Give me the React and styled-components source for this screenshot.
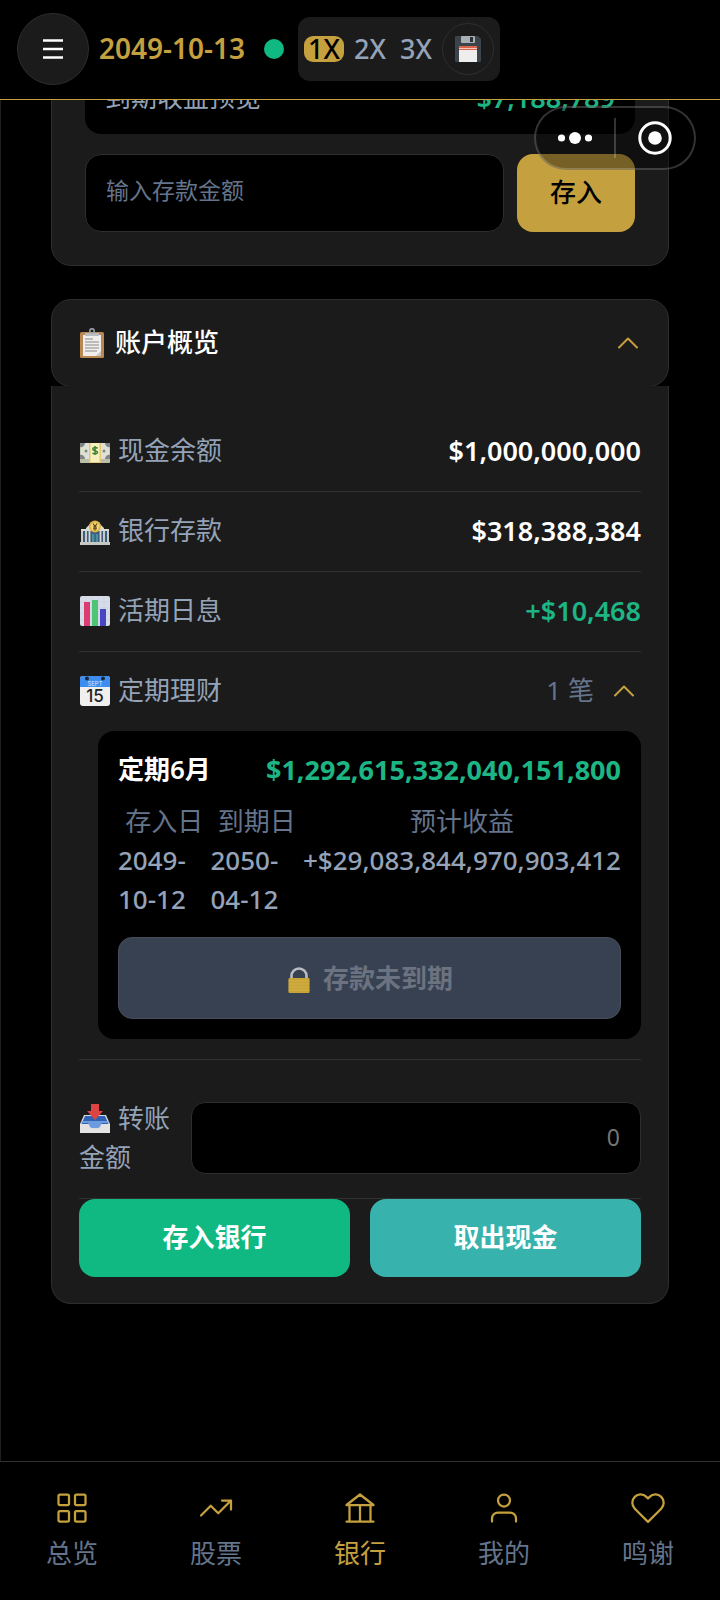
import React, { useState } from 'react';
import styled, { createGlobalStyle } from 'styled-components';

const GOLD = '#C5A03F';
const GREEN = '#10B981';

export default function App(){

    const [Speed, setSpeed] = useState("1X")
    const [ShowOverview, setShowOverview] = useState(true)
    const [ShowFixed, setShowFixed] = useState(true)
    const [Tab, setTab] = useState("银行")

    const speeds = ["1X","2X","3X"]
    const rows = [
        { icon: <CashIcon/>, label: "现金余额", value: "$1,000,000,000" },
        { icon: <BankEmoji/>, label: "银行存款", value: "$318,388,384" },
        { icon: <ChartEmoji/>, label: "活期日息", value: "+$10,468", up: true }
    ]
    const tabs = [
        { name: "总览", icon: <GridIcon/> },
        { name: "股票", icon: <TrendIcon/> },
        { name: "银行", icon: <BankIcon/> },
        { name: "我的", icon: <UserIcon/> },
        { name: "鸣谢", icon: <HeartIcon/> }
    ]

    return(
        <>
        <GlobalStyle/>
        <Header>
            <MenuButton aria-label="菜单"><MenuIcon/></MenuButton>
            <GameDate>2049-10-13</GameDate>
            <StatusDot/>
            <SpeedPanel>
                {speeds.map((s) => <SpeedButton key={s} $active={s === Speed} onClick={() => setSpeed(s)}>{s}</SpeedButton>)}
                <SaveButton aria-label="保存"><FloppyEmoji/></SaveButton>
            </SpeedPanel>
        </Header>

        <Capsule>
            <CapsuleButton aria-label="更多"><DotsIcon/></CapsuleButton>
            <CapsuleLine/>
            <CapsuleButton aria-label="关闭"><TargetIcon/></CapsuleButton>
        </Capsule>

        <Screen>
            <DepositCard>
                <Preview>
                    <PreviewLabel>到期收益预览</PreviewLabel>
                    <Money $up>$7,188,789</Money>
                </Preview>
                <DepositForm>
                    <DepositInput aria-label="存款金额" placeholder="输入存款金额"/>
                    <DepositButton>存入</DepositButton>
                </DepositForm>
            </DepositCard>

            <OverviewHead onClick={() => setShowOverview(!ShowOverview)}>
                <OverviewTitle><ClipboardEmoji/>账户概览</OverviewTitle>
                <ChevronIcon/>
            </OverviewHead>

            {ShowOverview && <OverviewBody>
                {rows.map((r) => (
                    <Row key={r.label}>
                        <RowLabel>{r.icon}{r.label}</RowLabel>
                        <Money $up={r.up}>{r.value}</Money>
                    </Row>
                ))}

                <FixedSection>
                    <FixedHead onClick={() => setShowFixed(!ShowFixed)}>
                        <RowLabel><CalendarEmoji/>定期理财</RowLabel>
                        <FixedCount>1 笔<ChevronIcon/></FixedCount>
                    </FixedHead>
                    {ShowFixed && <FixedCard>
                        <FixedTitle>
                            <FixedName>定期6月</FixedName>
                            <Money $up $strong>$1,292,615,332,040,151,800</Money>
                        </FixedTitle>
                        <FixedInfo>
                            <div><dt>存入日</dt><dd>2049-<wbr/>10-12</dd></div>
                            <div><dt>到期日</dt><dd>2050-<wbr/>04-12</dd></div>
                            <div><dt>预计收益</dt><dd>+$29,083,844,970,903,412</dd></div>
                        </FixedInfo>
                        <LockedButton disabled><LockEmoji/>存款未到期</LockedButton>
                    </FixedCard>}
                </FixedSection>

                <TransferRow>
                    <TransferLabel htmlFor="transfer"><InboxEmoji/>转账金额</TransferLabel>
                    <TransferInput id="transfer" placeholder="0"/>
                </TransferRow>
                <Actions>
                    <ActionButton $color={GREEN}>存入银行</ActionButton>
                    <ActionButton $color="#38B2AC">取出现金</ActionButton>
                </Actions>
            </OverviewBody>}
        </Screen>

        <TabBar>
            {tabs.map((t) => (
                <TabLink key={t.name} href="#" $active={t.name === Tab} onClick={() => setTab(t.name)}>
                    {t.icon}
                    {t.name}
                </TabLink>
            ))}
        </TabBar>
        </>
    )
}

// ICONES

function MenuIcon(){
    return <svg width="20" height="20" viewBox="0 0 20 20" stroke="#fff" strokeWidth="2.400"><path d="M0 1.500h20M0 10h20M0 18.500h20"/></svg>
}

function DotsIcon(){
    return <svg width="34" height="14" viewBox="0 0 34 14" fill="#fff"><circle cx="3.500" cy="7" r="3.600"/><circle cx="17" cy="7" r="6"/><circle cx="30.500" cy="7" r="3.600"/></svg>
}

function TargetIcon(){
    return <svg width="34" height="34" viewBox="0 0 34 34"><circle cx="17" cy="17" r="15.200" fill="none" stroke="#fff" strokeWidth="3"/><circle cx="17" cy="17" r="6.800" fill="#fff"/></svg>
}

function ChevronIcon(){
    return <svg width="20" height="12" viewBox="0 0 20 12" fill="none" stroke={GOLD} strokeWidth="2" strokeLinecap="round" strokeLinejoin="round"><path d="M1 10.500l9-9 9 9"/></svg>
}

function GridIcon(){
    return <LineIcon viewBox="0 0 24 24"><rect x="3" y="3" width="7" height="7" rx="1"/><rect x="14" y="3" width="7" height="7" rx="1"/><rect x="3" y="14" width="7" height="7" rx="1"/><rect x="14" y="14" width="7" height="7" rx="1"/></LineIcon>
}

function TrendIcon(){
    return <LineIcon viewBox="0 0 24 24"><path d="M2 17l6.500-6.500 5 5L22 7M16 7h6v6"/></LineIcon>
}

function BankIcon(){
    return <LineIcon viewBox="0 0 24 24"><path d="M3 21h18M3 10h18M3 10l9-7 9 7M5 10v11M12 10v11M19 10v11"/></LineIcon>
}

function UserIcon(){
    return <LineIcon viewBox="0 0 24 24"><path d="M20 21v-2a4 4 0 0 0-4-4H8a4 4 0 0 0-4 4v2"/><circle cx="12" cy="7" r="4"/></LineIcon>
}

function HeartIcon(){
    return <LineIcon viewBox="0 0 24 24"><path d="M20.840 4.610a5.500 5.500 0 0 0-7.780 0L12 5.670l-1.060-1.060a5.500 5.500 0 0 0-7.780 7.780l1.060 1.060L12 21.230l7.780-7.780 1.060-1.060a5.500 5.500 0 0 0 0-7.780z"/></LineIcon>
}

function FloppyEmoji(){
    return(
        <svg width="26" height="26" viewBox="0 0 26 26">
            <path d="M1 0h22l3 3v22a1 1 0 0 1-1 1H1a1 1 0 0 1-1-1V1a1 1 0 0 1 1-1z" fill="#3A444A"/>
            <rect x="6" y="0" width="14" height="7" rx="1" fill="#A9AFB3"/>
            <rect x="15" y="1" width="3" height="5" fill="#2A3237"/>
            <rect x="4" y="10" width="18" height="16" fill="#EDEDED"/>
            <rect x="4" y="10" width="18" height="4" fill="#D9644A"/>
            <path d="M4 12.500h18" stroke="#F3C9BE" strokeWidth="1"/>
        </svg>
    )
}

function ClipboardEmoji(){
    return(
        <Emoji width="28" height="32" viewBox="0 0 28 32" $gap={8}>
            <rect x="1" y="5" width="24" height="26" rx="1.500" fill="#B98850"/>
            <rect x="4" y="8" width="18" height="21" fill="#F0EEEC"/>
            <path d="M22 24v5h-5z" fill="#C9C5C1"/>
            <path d="M6 6h14v3H6z" fill="#B9BDC1"/>
            <circle cx="13" cy="4" r="2.200" fill="none" stroke="#A5AAAF" strokeWidth="1.400"/>
            <path d="M6 12h8M6 15h14M6 18h14M6 21h14M6 24h12" stroke="#8A8A8A" strokeWidth="1.200"/>
        </Emoji>
    )
}

function CashIcon(){
    return(
        <Emoji width="32" height="32" viewBox="0 0 32 32" $gap={7}>
            <rect x="1" y="8" width="30" height="20" rx="1" fill="#C9CDB4"/>
            <rect x="2" y="8" width="28" height="16" fill="#E0E1D6"/>
            <path d="M1 8h5a4 4 0 0 1-5 4zM31 8h-5a4 4 0 0 0 5 4zM1 24h5a4 4 0 0 0-5-4zM31 24h-5a4 4 0 0 1 5-4z" fill="#7F8488"/>
            <circle cx="7" cy="16" r="1.500" fill="#7F8A78"/><circle cx="25" cy="16" r="1.500" fill="#7F8A78"/>
            <rect x="10" y="8" width="12" height="20" fill="#E6C776"/>
            <rect x="11.500" y="8" width="9" height="19" fill="#F5EFBE"/>
            <path d="M18.500 13.500c-.8-1.300-4.800-1.300-4.800.6 0 2 4.800 1.200 4.800 3.200 0 1.900-4 2-5 .5M16 11v9" fill="none" stroke="#3F8235" strokeWidth="1.500"/>
            <path d="M1 25h9M22 25h9M1 27h9M22 27h9" stroke="#A5A88F" strokeWidth=".7"/>
        </Emoji>
    )
}

function BankEmoji(){
    return(
        <Emoji width="32" height="32" viewBox="0 0 32 32" $gap={7}>
            <path d="M2 15h28v13H2z" fill="#3E5C7E"/>
            <path d="M2 14h7v2H2zM23 14h7v2h-7zM7 13l5-5h8l5 5v3H7z" fill="#D9DCD3"/>
            <path d="M3 16v11M7 15v12M10.500 15v12M21.500 15v12M25 15v12M29 16v11" stroke="#D5D8D0" strokeWidth="1.800"/>
            <rect x="13" y="19" width="6" height="8" fill="#4E8FA0"/>
            <path d="M16 19v8" stroke="#27465A"/>
            <circle cx="16" cy="11.500" r="6" fill="#E0B647"/>
            <circle cx="16" cy="11.500" r="4" fill="#F3D77B"/>
            <path d="M14 8.500l2 3 2-3M16 11.500v4M14 12h4M14 13.700h4" stroke="#5B4218" strokeWidth="1.100" fill="none"/>
            <path d="M1 27h30v3H1z" fill="#C6C9C4"/>
        </Emoji>
    )
}

function ChartEmoji(){
    return(
        <Emoji width="32" height="32" viewBox="0 0 32 32" $gap={7}>
            <rect x="1" y="1" width="30" height="30" rx="2" fill="#D7DDE8"/>
            <path d="M1 7h30M1 13h30M1 19h30M1 25h30M7 1v30M13 1v30M19 1v30M25 1v30" stroke="#C6CDDB" strokeWidth=".6"/>
            <rect x="5" y="7" width="6" height="24" fill="#DB3D73"/>
            <rect x="13" y="5" width="6" height="26" fill="#4DC574"/>
            <rect x="21" y="14" width="6" height="17" fill="#4A45C4"/>
        </Emoji>
    )
}

function CalendarEmoji(){
    return(
        <Emoji width="32" height="32" viewBox="0 0 32 32" $gap={7}>
            <rect x="1" y="1" width="30" height="30" rx="3" fill="#EFEFEF"/>
            <path d="M1 12V4a3 3 0 0 1 3-3h24a3 3 0 0 1 3 3v8z" fill="#3D8DF0"/>
            <circle cx="8" cy="3.500" r="2" fill="#1B2733"/><circle cx="24" cy="3.500" r="2" fill="#1B2733"/>
            <text x="16" y="10.500" fontSize="6" textAnchor="middle" fill="#D4E6FF" fontFamily="Inter, sans-serif">SEPT</text>
            <text x="16" y="27" fontSize="17" fontWeight="500" textAnchor="middle" fill="#222" fontFamily="Inter, sans-serif">15</text>
        </Emoji>
    )
}

function LockEmoji(){
    return(
        <Emoji width="26" height="30" viewBox="0 0 26 30" $gap={11}>
            <path d="M5.500 15v-4a7.500 7.500 0 0 1 15 0v4" fill="none" stroke="#B9BDC1" strokeWidth="2.600"/>
            <rect x="2.500" y="13" width="21" height="15" rx="1" fill="#C9A536"/>
            <path d="M2.500 16h21M2.500 19h21M2.500 22h21M2.500 25h21" stroke="#D2B046" strokeWidth="1"/>
        </Emoji>
    )
}

function InboxEmoji(){
    return(
        <Emoji width="32" height="32" viewBox="0 0 32 32" $gap={7}>
            <path d="M5 12h22l4 9v9H1v-9z" fill="#DCDCE0"/>
            <path d="M6 13h20l3.500 8H2.500z" fill="#2F62B5"/>
            <path d="M2.500 20H9c1 0 1.500 5 4 5h6c2.500 0 3-5 4-5h6.500v-2h-27z" fill="#6E9BE0"/>
            <path d="M1 21h7.500c1 0 1.500 5 4 5h7c2.500 0 3-5 4-5H31v9H1z" fill="#E4E3E3"/>
            <path d="M12 1h8v7h4l-8 9-8-9h4z" fill="#DE4444"/>
        </Emoji>
    )
}

const GlobalStyle = createGlobalStyle`
    * {
        box-sizing: border-box;
    }
    body {
        margin: 0;
        background: #000;
        color: #fff;
        font-family: 'Noto Sans', 'Noto Sans CJK SC', sans-serif;
        font-size: 26px;
        line-height: 39px;
    }
    button, input {
        font-family: inherit;
        font-size: 26px;
        color: inherit;
        margin: 0;
    }
    button {
        padding: 0;
        border: none;
        background: none;
    }
`

const LineIcon = styled.svg`
    width: 36px;
    height: 36px;
    fill: none;
    stroke: ${GOLD};
    stroke-width: 1.5;
    stroke-linecap: round;
    stroke-linejoin: round;
`

const Emoji = styled.svg`
    flex: none;
    vertical-align: -7px;
    margin-right: ${props => props.$gap}px;
`

// TOPO

const Header = styled.header`
    position: fixed;
    top: 0;
    left: 0;
    width: 100%;
    height: 100px;
    padding: 0 17px 2px;
    display: flex;
    align-items: center;
    background: #000;
    border-bottom: 1px solid ${GOLD};
    z-index: 1;
`

const MenuButton = styled.button`
    width: 72px;
    height: 72px;
    flex: none;
    display: flex;
    align-items: center;
    justify-content: center;
    background: #1B1B1B;
    border: 1px solid #2E2E2E;
    border-radius: 50%;
`

const GameDate = styled.span`
    margin-left: 10px;
    font-size: 28px;
    font-weight: 600;
    color: ${GOLD};
`

const StatusDot = styled.span`
    width: 20px;
    height: 20px;
    margin: 0 14px 0 19px;
    border-radius: 50%;
    background: ${GREEN};
`

const SpeedPanel = styled.div`
    height: 64px;
    padding: 0 6px;
    display: flex;
    align-items: center;
    gap: 6px;
    background: #1B1B1B;
    border-radius: 12px;
`

const SpeedButton = styled.button`
    width: 40px;
    height: 26px;
    line-height: 26px;
    border-radius: 9px;
    font-size: 27px;
    font-weight: 500;
    background: ${props => props.$active ? GOLD : "none"};
    color: ${props => props.$active ? "#000" : "#94A3B8"};
`

const SaveButton = styled.button`
    width: 52px;
    height: 52px;
    display: flex;
    align-items: center;
    justify-content: center;
    border: 1px solid #2E2E2E;
    border-radius: 50%;
`

const Capsule = styled.div`
    position: fixed;
    top: 106px;
    right: 24px;
    width: 162px;
    height: 64px;
    display: flex;
    align-items: center;
    background: rgba(0, 0, 0, 0.4);
    border: 2px solid rgba(255, 255, 255, 0.2);
    border-radius: 32px;
    z-index: 2;
`

const CapsuleLine = styled.span`
    width: 2px;
    height: 40px;
    background: rgba(255, 255, 255, 0.2);
`

const CapsuleButton = styled.button`
    flex: 1;
    display: flex;
    align-items: center;
    justify-content: center;
`

// CONTEUDO

const Screen = styled.main`
    padding: 33px 50px 295px;
    border-left: 1px solid #1F1F1F;
    border-right: 1px solid transparent;
`

const DepositCard = styled.section`
    padding: 33px;
    background: #1B1B1B;
    border: 1px solid #2E2E2E;
    border-radius: 20px;
`

const Preview = styled.div`
    display: flex;
    justify-content: space-between;
    padding: 11px 20px 17px;
    background: #000;
    border-radius: 16px;
`

const PreviewLabel = styled.span`
    color: #94A3B8;
`

const Money = styled.span`
    font-size: 27px;
    font-weight: ${props => props.$strong ? 700 : 600};
    color: ${props => props.$up ? "#1DB584" : "#fff"};
`

const DepositForm = styled.div`
    display: flex;
    gap: 13px;
    margin-top: 20px;
`

const DepositInput = styled.input`
    flex: 1;
    min-width: 0;
    height: 78px;
    padding: 0 20px 6px;
    background: #000;
    border: 1px solid #2E2E2E;
    border-radius: 16px;
    font-size: 23px;

    &::placeholder{
        color: #64748B;
    }
`

const DepositButton = styled.button`
    width: 118px;
    height: 78px;
    padding-bottom: 5px;
    background: ${GOLD};
    border-radius: 16px;
    font-weight: 500;
    color: #000;
`

const OverviewHead = styled.button`
    width: 100%;
    height: 88px;
    margin-top: 33px;
    padding: 0 30px 4px 27px;
    display: flex;
    align-items: center;
    justify-content: space-between;
    background: #1B1B1B;
    border: 1px solid #2E2E2E;
    border-radius: 20px;

    > svg{
        margin-top: 4px;
    }
`

const OverviewTitle = styled.span`
    font-weight: 500;
`

const OverviewBody = styled.section`
    margin-top: -1px;
    padding: 26px 27px;
    background: #1B1B1B;
    border: 1px solid #2E2E2E;
    border-top: none;
    border-radius: 0 0 20px 20px;
`

const Row = styled.div`
    display: flex;
    justify-content: space-between;
    padding: 19px 0 21px;
    border-bottom: 1px solid #303030;
`

const RowLabel = styled.span`
    color: #94A3B8;
`

const FixedSection = styled.div`
    padding-bottom: 20px;
    border-bottom: 1px solid #303030;
`

const FixedHead = styled.button`
    width: 100%;
    padding: 19px 7px 21px 0;
    display: flex;
    justify-content: space-between;
    line-height: 39px;
`

const FixedCount = styled.span`
    display: flex;
    align-items: center;
    gap: 20px;
    color: #64748B;
`

const FixedCard = styled.div`
    margin-left: 19px;
    padding: 19px 20px 20px;
    background: #000;
    border-radius: 16px;
`

const FixedTitle = styled.div`
    display: flex;
    justify-content: space-between;
`

const FixedName = styled.span`
    font-weight: 600;
`

const FixedInfo = styled.dl`
    display: grid;
    grid-template-columns: 1fr 1fr auto;
    margin: 13px 0 18px;

    dt{
        text-align: center;
        color: #64748B;
    }

    dd{
        margin: 0;
        font-weight: 500;
        color: #94A3B8;
    }
`

const LockedButton = styled.button`
    width: 100%;
    height: 82px;
    padding-bottom: 3px;
    background: #374151;
    border: 1px solid #484E58;
    border-radius: 14px;
    font-weight: 600;
    color: #6B7280;
`

const TransferRow = styled.div`
    display: flex;
    align-items: center;
    justify-content: space-between;
    gap: 20px;
    padding: 39px 0 21px;
    border-bottom: 1px solid #303030;
`

const TransferLabel = styled.label`
    color: #94A3B8;
`

const TransferInput = styled.input`
    flex: 0 0 80%;
    min-width: 0;
    height: 72px;
    padding: 0 20px 3px;
    background: #000;
    border: 1px solid #2E2E2E;
    border-radius: 14px;
    font-size: 23px;
    text-align: right;

    &::placeholder{
        color: #757575;
    }
`

const Actions = styled.div`
    display: flex;
    gap: 20px;
`

const ActionButton = styled.button`
    flex: 1;
    height: 78px;
    padding-bottom: 5px;
    background: ${props => props.$color};
    border-radius: 16px;
    font-weight: 600;
`

// RODAPE

const TabBar = styled.nav`
    position: fixed;
    bottom: 0;
    left: 0;
    width: 100%;
    height: 139px;
    padding-top: 28px;
    display: flex;
    background: #000;
    border-top: 1px solid #303030;
    z-index: 1;
`

const TabLink = styled.a`
    flex: 1;
    display: flex;
    flex-direction: column;
    align-items: center;
    gap: 8px;
    text-decoration: none;
    color: ${props => props.$active ? GOLD : "#64748B"};
`
